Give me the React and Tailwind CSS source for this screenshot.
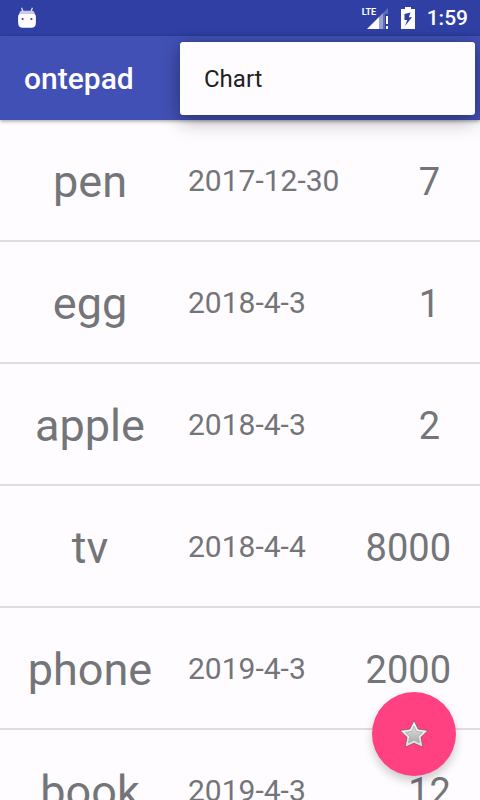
const entries = [
  { name: "pen", date: "2017-12-30", value: 7 },
  { name: "egg", date: "2018-4-3", value: 1 },
  { name: "apple", date: "2018-4-3", value: 2 },
  { name: "tv", date: "2018-4-4", value: 8000 },
  { name: "phone", date: "2019-4-3", value: 2000 },
  { name: "book", date: "2019-4-3", value: 12 },
];

function RobotIcon() {
  return (
    <svg className="h-[22px] w-[18px]" viewBox="0 0 18 22" aria-hidden="true">
      <path d="M3.6.8l1.500 4M14.400.8l-1.500 4" stroke="#dcdff4" strokeWidth="1.300" fill="none" />
      <path d="M3.500 3.800h11q1.700 0 2.500 3.800H1Q1.800 3.800 3.500 3.800z" fill="#c9cae9" />
      <path d="M1.500 7h15q1.400.8 1.400 2.700v5.500q0 5.600-4.600 5.600H4.700Q.1 20.800.1 15.200V9.700Q.1 7.800 1.500 7z" fill="#fffcff" />
      <circle cx="4.600" cy="12" r="1.100" fill="#303f9f" />
      <circle cx="13.400" cy="12" r="1.100" fill="#303f9f" />
    </svg>
  );
}

function SignalIcon() {
  return (
    <div className="relative h-[22px] w-[27px]">
      <svg className="h-[22px] w-[27px]" viewBox="0 0 27 22" aria-hidden="true">
        <path d="M5 22L17 10v12z" fill="#fffcff" />
        <path d="M17 10l4-4v16h-4z" fill="#9aa0d2" />
        <path d="M21 6l5-5v6h-3v15h-2z" fill="#626cb6" />
        <path d="M24 9h2v8h-2zM24 19h2v3h-2z" fill="#fffcff" />
      </svg>
      <span className="absolute top-0 left-0 text-[9px] leading-[10px] font-bold">LTE</span>
    </div>
  );
}

function BatteryIcon() {
  return (
    <svg className="h-[22px] w-[14px]" viewBox="0 0 14 22" aria-hidden="true">
      <path d="M4 0h6v2h4v20H0V2h4z" fill="#fffcff" />
      <path d="M9.500 5.500L3.500 7v6h2.700L4 19l7-8.800H7.800z" fill="#303f9f" />
    </svg>
  );
}

function StarIcon() {
  return (
    <svg className="h-[30px] w-[30px]" viewBox="0 0 30 30" aria-hidden="true">
      <defs>
        <linearGradient id="rim" x1="0" y1="0" x2="0" y2="1">
          <stop offset="0" stopColor="#fbfbfb" />
          <stop offset="1" stopColor="#dcdcdc" />
        </linearGradient>
        <linearGradient id="face" x1="0" y1="0" x2="0" y2="1">
          <stop offset="0" stopColor="#dedede" />
          <stop offset="1" stopColor="#adadad" />
        </linearGradient>
      </defs>
      <path
        d="M15 1.500l4.200 8.600 9.800 1.300-7 6.900L24 28.300 15 24.200 6 28.300l2-10-7-6.900 9.800-1.300z"
        fill="url(#rim)"
        stroke="#6f4a59"
        strokeOpacity=".75"
        strokeWidth=".9"
        strokeLinejoin="round"
      />
      <path
        d="M15 7.200l2.500 5.300 6.100.8-4.400 4.300 1.200 6.200-5.400-2.700-5.400 2.700 1.200-6.200-4.400-4.300 6.100-.8z"
        fill="url(#face)"
        stroke="#a2a2a2"
        strokeWidth=".7"
        strokeLinejoin="round"
      />
    </svg>
  );
}

export default function App() {
  return (
    <div className="relative flex h-screen flex-col overflow-hidden bg-[#fffcff] [font-family:Roboto,sans-serif]">
      <div className="flex h-9 shrink-0 items-center justify-between bg-[#303fa3] pr-3 pl-[18px] text-[#fffcff]">
        <RobotIcon />
        <div className="flex items-center">
          <SignalIcon />
          <span className="ml-3">
            <BatteryIcon />
          </span>
          <time className="ml-3 text-[21px] leading-6 font-medium">1:59</time>
        </div>
      </div>

      <header className="relative z-10 flex h-[84px] shrink-0 items-center bg-[#4150b5] px-6 pt-0.5 shadow-[0_1px_4px_rgba(0,0,0,0.4)]">
        <h1 className="text-[30px] leading-9 font-medium text-[#fffcff]">ontepad</h1>
      </header>

      <main className="min-h-0 flex-1 overflow-y-auto [scrollbar-width:none]">
        <table className="w-full table-fixed border-separate border-spacing-0 text-[#737579]">
          <tbody>
            {entries.map((entry) => (
              <tr key={entry.name} className="h-[122px] *:border-b-2 *:border-[#dfdde0]">
                <th scope="row" className="w-[180px] p-0 pt-1 text-center text-[45px] leading-[52px] font-normal">
                  {entry.name}
                </th>
                <td className="p-0 pt-0.5 pl-2 text-[30px] leading-9">{entry.date}</td>
                <td className="w-[120px] p-0 pt-1 pr-[29px] text-right text-[38px] leading-11">
                  <span className="inline-block min-w-[43px] text-center">{entry.value}</span>
                </td>
              </tr>
            ))}
          </tbody>
        </table>
      </main>

      <div
        role="menu"
        className="absolute top-[42px] right-[5px] z-20 w-[295px] rounded-[3px] bg-[#fffcff] shadow-[0_6px_20px_rgba(0,0,0,0.3),0_0_12px_rgba(0,0,0,0.1)]"
      >
        <button type="button" role="menuitem" className="flex h-[73px] w-full items-center px-6 text-2xl text-[#212123]">
          Chart
        </button>
      </div>

      <button
        type="button"
        aria-label="Favorite"
        className="absolute right-6 bottom-6 z-10 flex size-[84px] items-center justify-center rounded-full bg-[#ff4081] shadow-[0_5px_10px_rgba(0,0,0,0.2)]"
      >
        <StarIcon />
      </button>
    </div>
  );
}
